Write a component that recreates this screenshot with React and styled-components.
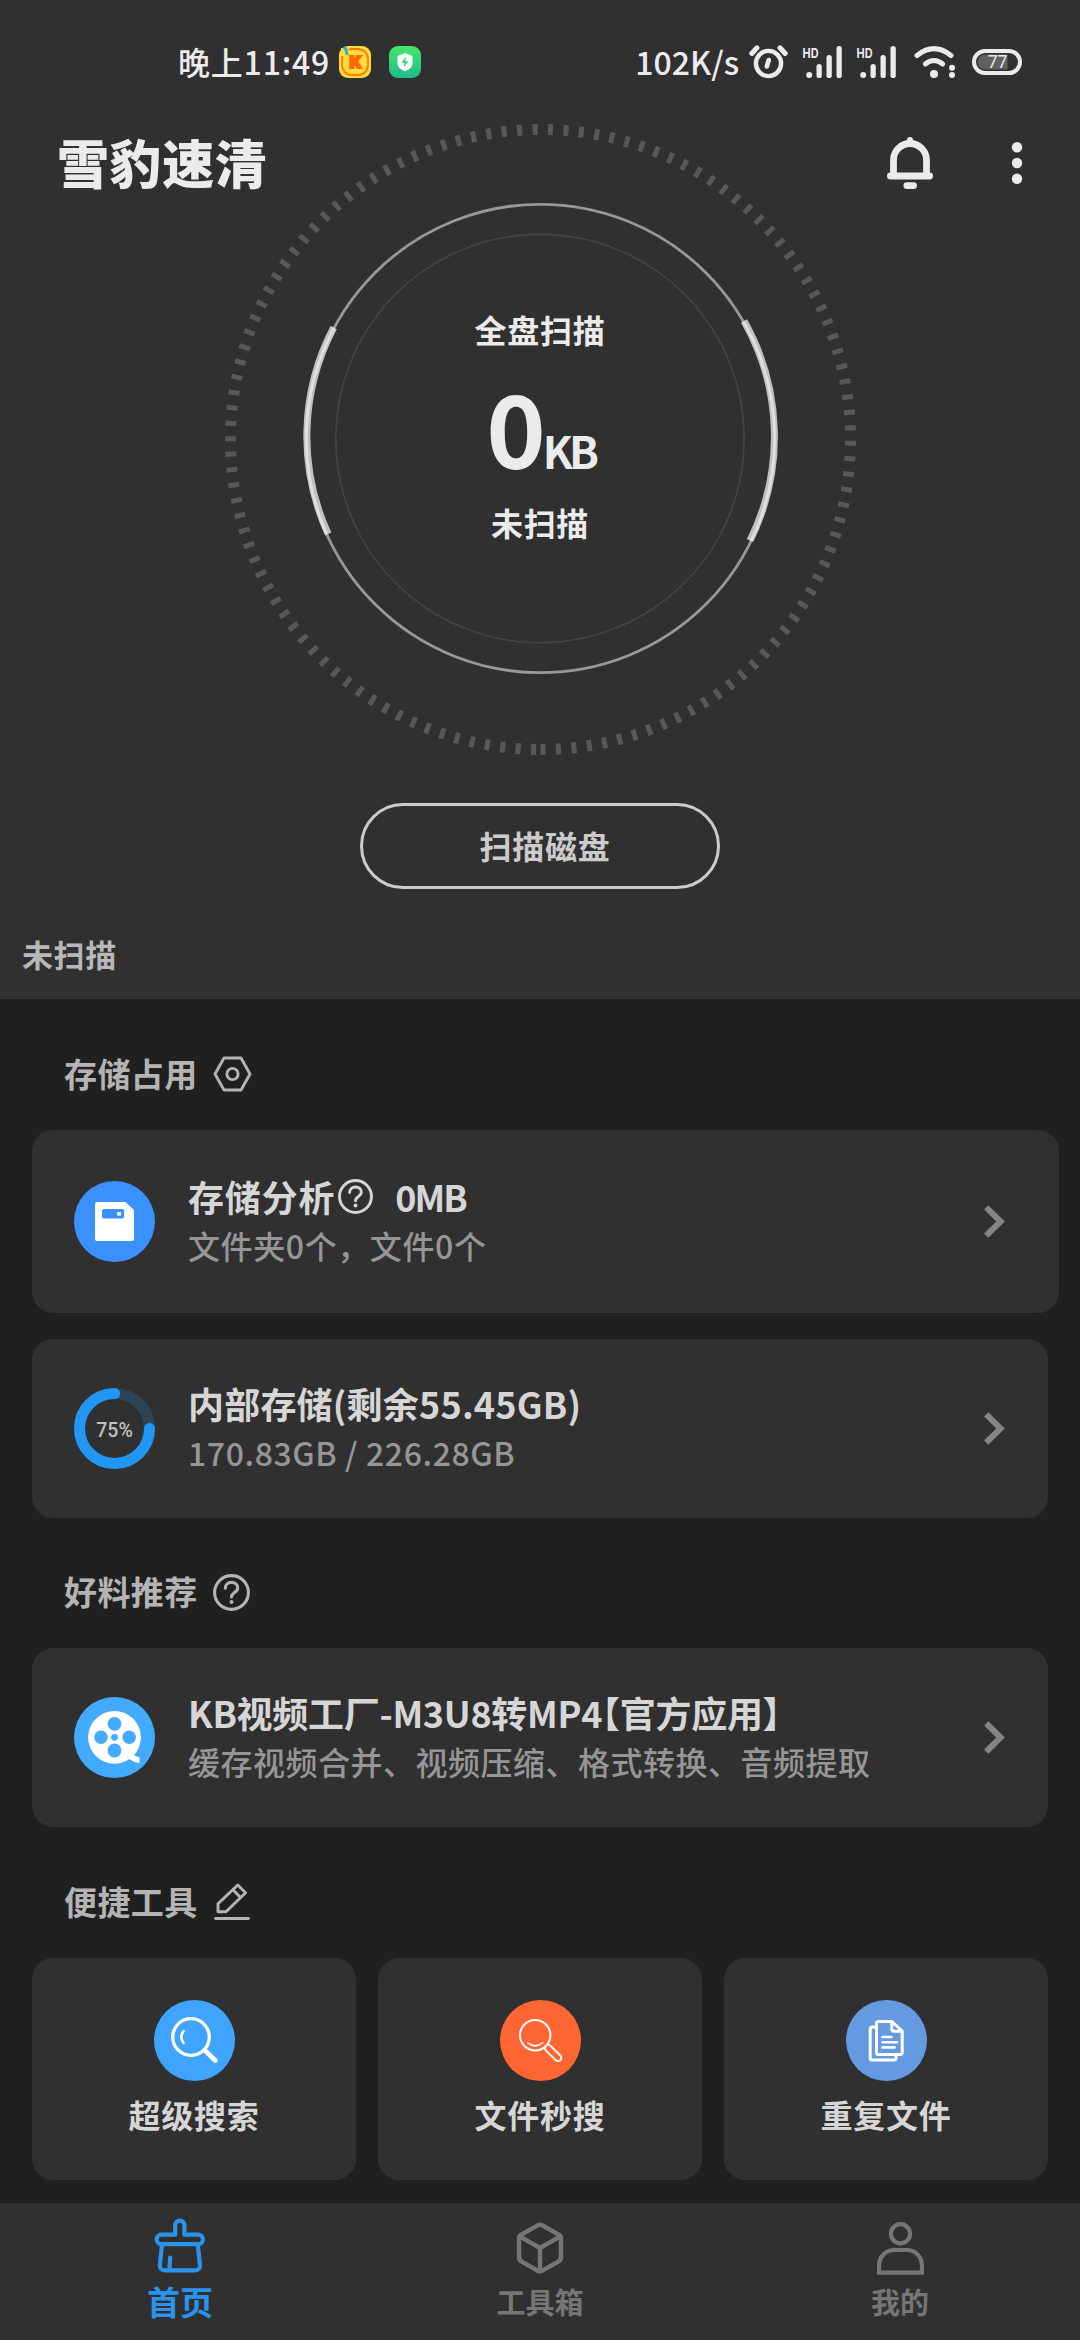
import React from 'react';
import styled, { createGlobalStyle } from 'styled-components';
import { Box } from 'lucide-react';

const GlobalStyle = createGlobalStyle`
  * {
    box-sizing: border-box;
  }

  body {
    margin: 0;
    background: #202020;
    color: #d6d6d6;
    font-family: 'Noto Sans CJK SC', 'Noto Sans', sans-serif;
  }

  svg {
    display: block;
    flex-shrink: 0;
  }
`;

const Screen = styled.div`
  display: flex;
  flex-direction: column;
  width: 1080px;
  height: 2340px;
  overflow: hidden;
`;

const Hero = styled.header`
  display: flex;
  flex-direction: column;
  align-items: center;
  height: 999px;
  background: #303030;
`;

const StatusBar = styled.div`
  display: flex;
  align-items: center;
  align-self: stretch;
  height: 124px;
  padding: 0 55px 0 178px;
  color: #ebebeb;
`;

const StatusText = styled.span`
  height: 48px;
  font-size: 32px;
  font-weight: 500;
  line-height: 46px;
  letter-spacing: ${({ $spacing }) => $spacing || 0}px;
  white-space: nowrap;
`;

const StatusApps = styled.div`
  display: flex;
  gap: 18px;
  margin-left: 9px;
`;

const StatusIcons = styled.div`
  display: flex;
  align-items: center;
  gap: 14px;
  margin-left: auto;

  ${StatusText} {
    margin-right: -4px;
  }
`;

const AppBar = styled.div`
  display: flex;
  align-items: center;
  align-self: stretch;
  height: 78px;
  padding: 0 57px 0 57px;
  color: #ebebeb;
`;

const AppTitle = styled.h1`
  flex: 1;
  height: 72px;
  margin: 0;
  font-size: 52px;
  font-weight: 900;
  line-height: 69px;
  letter-spacing: 0.6px;
`;

const AppActions = styled.div`
  display: flex;
  align-items: center;
  gap: 78px;
`;

const Dial = styled.div`
  position: relative;
  display: flex;
  flex-direction: column;
  align-items: center;
  width: 631px;
  height: 631px;
  margin-top: -78px;
  padding-top: 181px;
  color: #ebebeb;
`;

const DialRing = styled.svg`
  position: absolute;
  inset: 0;
`;

const DialLabel = styled.div`
  height: 48px;
  font-size: 32px;
  font-weight: 700;
  line-height: 48px;
  letter-spacing: 0.7px;
`;

const DialValue = styled.div`
  display: flex;
  align-items: baseline;
  height: 145px;
  padding-left: 1px;
  font-size: 101px;
  font-weight: 700;
  line-height: 145px;
  letter-spacing: -3px;

  small {
    font-size: 44px;
    letter-spacing: -4px;
  }
`;

const ScanButton = styled.button`
  width: 360px;
  height: 86px;
  margin-top: 48px;
  padding: 0 0 3px 10px;
  border: 3px solid #cbcbcb;
  border-radius: 43px;
  background: none;
  color: #cbcbcb;
  font-family: inherit;
  font-size: 32px;
  font-weight: 700;
  line-height: 48px;
  letter-spacing: 0.7px;
`;

const ScanStatus = styled.div`
  align-self: flex-start;
  margin-top: 41px;
  padding-left: 22px;
  color: #b8b8b8;
  font-size: 31px;
  font-weight: 700;
  line-height: 48px;
  letter-spacing: 0.6px;
`;

const Content = styled.main`
  flex: 1;
  padding: 0 32px;
`;

const SectionHead = styled.div`
  display: flex;
  align-items: center;
  gap: 15px;
  height: ${({ $height }) => $height || 131}px;
  padding: 18px 0 0 32px;
  color: #b4b4b4;
`;

const SectionTitle = styled.h2`
  height: 46px;
  margin: 0;
  font-size: 33px;
  font-weight: 700;
  line-height: 44px;
  letter-spacing: 0.4px;
`;

const Card = styled.div`
  display: flex;
  align-items: center;
  height: ${({ $wide }) => $wide ? 183 : 179}px;
  margin-right: ${({ $wide }) => $wide ? -11 : 0}px;
  padding: 0 ${({ $wide }) => $wide ? 54 : 43}px 0 42px;
  border-radius: 21px;
  background: #303030;

  & + & {
    margin-top: 26px;
  }
`;

const CardBody = styled.div`
  flex: 1;
  padding-left: 33px;
  white-space: nowrap;
`;

const CardTitle = styled.div`
  display: flex;
  align-items: center;
  height: 50px;
  font-size: 36px;
  font-weight: 700;
  line-height: 50px;
  letter-spacing: ${({ $spacing }) => $spacing || 0}px;

  span {
    height: 50px;
    line-height: 47px;
  }

  svg {
    margin: -2px 22px 0 3px;
  }
`;

const CardSize = styled.span`
  letter-spacing: -2px;
`;

const CardText = styled.div`
  height: 48px;
  color: #969696;
  font-size: 32px;
  font-weight: 500;
  line-height: 45px;
  letter-spacing: ${({ $spacing }) => $spacing || 0}px;
`;

const HalfWidth = styled.span`
  font-feature-settings: 'halt';
`;

const ToolGrid = styled.div`
  display: grid;
  grid-template-columns: repeat(3, 1fr);
  gap: 22px;
`;

const Tool = styled.div`
  display: flex;
  flex-direction: column;
  align-items: center;
  height: 222px;
  padding-top: 42px;
  border-radius: 21px;
  background: #303030;
`;

const ToolName = styled.div`
  margin-top: 9px;
  font-size: 32px;
  font-weight: 700;
  line-height: 48px;
  letter-spacing: 0.7px;
`;

const TabBar = styled.nav`
  display: grid;
  grid-template-columns: repeat(3, 1fr);
  height: 137px;
  background: #303030;
`;

const Tab = styled.div`
  display: flex;
  flex-direction: column;
  align-items: center;
  justify-content: flex-end;
  padding-bottom: 15px;
  color: ${({ $active }) => $active ? '#2a94ec' : '#767676'};
  font-size: ${({ $active }) => $active ? 33 : 29}px;
  font-weight: 700;
  line-height: 48px;
`;

const TabIcon = styled.div`
  display: flex;
  align-items: center;
  justify-content: center;
  height: 56px;
  margin-bottom: ${({ $active }) => $active ? 3 : 1}px;
`;

const AppBadgeK = () => (
  <svg width="32" height="32" viewBox="0 0 32 32">
    <rect width="32" height="32" rx="9" fill="#ffdd38" />
    <rect x="3" y="3" width="26" height="26" rx="10" fill="none" stroke="#ff7a14" strokeWidth="1.8" />
    <path d="M2 2h8v8H2z" fill="#ffdd38" />
    <path d="M5 1l3 4M7 5l1.500 4" stroke="#1fb6c9" strokeWidth="3" />
    <text x="16.5" y="22" textAnchor="middle" fontFamily="Inter, sans-serif" fontSize="16" fontWeight="900" fill="#ff6a00" stroke="#ff6a00" strokeWidth="2">K</text>
  </svg>
);

const AppBadgeShield = () => (
  <svg width="32" height="32" viewBox="0 0 32 32">
    <defs>
      <linearGradient id="shield" x1="0" y1="0" x2="0" y2="1">
        <stop offset="0" stopColor="#46e66a" />
        <stop offset="1" stopColor="#1bbd8b" />
      </linearGradient>
    </defs>
    <rect width="32" height="32" rx="9" fill="url(#shield)" />
    <path d="M16 7l7.500 3v7c0 4-3 6.500-7.500 8.200C11.500 23.500 8.500 21 8.500 17v-7z" fill="#fff" />
    <path d="M17 10.500l-4.500 6.300h3l-.8 4.700 4.700-6.300h-3.200z" fill="#2bd07c" />
  </svg>
);

const AlarmIcon = () => (
  <svg width="39" height="34" viewBox="0 0 39 34" fill="none" stroke="currentColor" strokeLinecap="round">
    <circle cx="19.500" cy="18.500" r="12.600" strokeWidth="4.400" />
    <path d="M2.800 8.500l5.200-5.700M36.200 8.500L31 2.800" strokeWidth="5" />
    <path d="M19.800 15l-2 6.500" strokeWidth="4.600" />
  </svg>
);

const SignalIcon = () => (
  <svg width="40" height="34" viewBox="0 0 40 34" fill="currentColor">
    <text x="0.500" y="12.600" fontFamily="Inter, sans-serif" fontSize="13.500" fontWeight="700" textLength="16" lengthAdjust="spacingAndGlyphs">HD</text>
    <circle cx="7.200" cy="30" r="3" />
    <rect x="14.500" y="19" width="5.300" height="14" rx="2.600" />
    <rect x="24.500" y="10" width="5.300" height="23" rx="2.600" />
    <rect x="34.500" y="1" width="5.300" height="32" rx="2.600" />
  </svg>
);

const WifiIcon = () => (
  <svg width="45" height="34" viewBox="0 0 45 34" fill="none" stroke="currentColor" strokeLinecap="round">
    <path d="M7 10.500Q24 -3.200 41 10.500" strokeWidth="5" />
    <path d="M15.300 19Q24 12 32.700 19" strokeWidth="5" />
    <circle cx="24" cy="29" r="4" fill="currentColor" stroke="none" />
    <circle cx="42" cy="22.700" r="3" fill="currentColor" stroke="none" />
    <circle cx="42" cy="30" r="3" fill="currentColor" stroke="none" />
  </svg>
);

const BatteryIcon = () => (
  <svg width="56" height="26" viewBox="0 0 56 26">
    <path d="M16 5.500H38.500V20.500H16a7.500 7.500 0 0 1 0-15z" fill="#606060" />
    <rect x="5" y="2" width="46" height="22" rx="11" fill="none" stroke="currentColor" strokeWidth="4" />
    <text x="28.500" y="19.300" textAnchor="middle" fontFamily="Roboto, sans-serif" fontSize="17.500" fill="currentColor">77</text>
  </svg>
);

const BellIcon = () => (
  <svg width="46" height="52" viewBox="0 0 46 52" fill="currentColor">
    <circle cx="23" cy="3" r="3" />
    <path d="M6.500 38V23a16.500 16.500 0 0 1 33 0v15" fill="none" stroke="currentColor" strokeWidth="6.800" />
    <rect y="35.600" width="46" height="6.800" rx="3.400" />
    <rect x="16.500" y="45.300" width="13.400" height="6.700" rx="3.300" />
  </svg>
);

const MoreIcon = () => (
  <svg width="12" height="44" viewBox="0 0 12 44" fill="currentColor">
    <circle cx="6" cy="6.200" r="5.200" />
    <circle cx="6" cy="22" r="5.200" />
    <circle cx="6" cy="37.800" r="5.200" />
  </svg>
);

const SettingsIcon = () => (
  <svg width="39" height="36" viewBox="0 0 39 36" fill="none" stroke="currentColor" strokeWidth="2.900" strokeLinejoin="round">
    <path d="M11 2h17l9 16-9 16H11L2 18z" />
    <circle cx="19.500" cy="18" r="5.600" />
  </svg>
);

const HelpIcon = ({ size }) => (
  <svg width={size} height={size} viewBox="0 0 37 37" fill="none" stroke="currentColor" strokeWidth="3.100" strokeLinecap="round">
    <circle cx="18.500" cy="18.500" r="16.900" />
    <path d="M12.300 14.300c0-3.600 2.700-5.900 6.200-5.900s6.200 2.300 6.200 5.500c0 4.600-6.200 4.600-6.200 9.100" />
    <circle cx="18.500" cy="28" r="2" fill="currentColor" stroke="none" />
  </svg>
);

const EditIcon = () => (
  <svg width="38" height="38" viewBox="-1 0 38 38" fill="none" stroke="currentColor" strokeWidth="2.900" strokeLinejoin="round" strokeLinecap="round">
    <path d="M4 28.800v-8L23.800 2l7.800 7.800L12 28.800z" />
    <path d="M19 6.800l7.500 7.600" />
    <path d="M1.500 35.500h33" />
  </svg>
);

const ChevronIcon = () => (
  <svg width="21" height="33" viewBox="0 0 21 33" fill="none" stroke="#858585" strokeWidth="6">
    <path d="M2.200 2.300l14.400 14.200L2.200 30.700" />
  </svg>
);

const StorageIcon = () => (
  <svg width="81" height="81" viewBox="0 0 81 81">
    <circle cx="40.500" cy="40.500" r="40.500" fill="#3b91ff" />
    <path d="M23 21h28.500l8.500 8v29a2 2 0 0 1-2 2H23a2 2 0 0 1-2-2V23a2 2 0 0 1 2-2z" fill="#fff" />
    <rect x="28" y="28" width="22" height="9.600" rx="2" fill="#3b91ff" />
    <rect x="43.200" y="31" width="3.800" height="3.600" fill="#fff" />
  </svg>
);

const UsageRing = ({ percent }) => {
  const length = 2 * Math.PI * 35;

  return (
    <svg width="81" height="81" viewBox="0 0 81 81">
      <circle cx="40.500" cy="40.500" r="35" fill="none" stroke="#2d4356" strokeWidth="11" />
      <circle
        cx="40.500"
        cy="40.500"
        r="35"
        fill="none"
        stroke="#2196f3"
        strokeWidth="11"
        strokeLinecap="round"
        strokeDasharray={`${length * percent / 100} ${length}`}
      />
      <text x="40.500" y="48.800" textAnchor="middle" fontFamily="Roboto, sans-serif" fontSize="19.500" fontWeight="500" fill="#c0c0c0">{percent}%</text>
    </svg>
  );
};

const ReelIcon = () => (
  <svg width="81" height="81" viewBox="0 0 81 81" fill="#42aaff">
    <circle cx="40.500" cy="40.500" r="40.500" />
    <circle cx="40.500" cy="40.300" r="26.400" fill="#fff" />
    <path d="M54 57c4 4 7 6 11.500 6" stroke="#fff" strokeWidth="6" fill="none" />
    <circle cx="40.500" cy="26.800" r="6.900" />
    <circle cx="27" cy="40.300" r="6.700" />
    <circle cx="55.200" cy="40.300" r="6.700" />
    <circle cx="40.500" cy="53.500" r="6.900" />
    <circle cx="40.500" cy="40.300" r="3.400" />
  </svg>
);

const SuperSearchIcon = () => (
  <svg width="81" height="81" viewBox="0 0 81 81" fill="none" stroke="#fff" strokeLinecap="round">
    <circle cx="40.500" cy="40.500" r="40.500" fill="#3fa4ff" stroke="none" />
    <circle cx="37" cy="37" r="18.300" strokeWidth="3.300" />
    <path d="M29.600 31Q25 37 29.600 43" strokeWidth="2.600" />
    <path d="M51 50.500l10.300 10" strokeWidth="4.800" />
  </svg>
);

const QuickSearchIcon = () => (
  <svg width="81" height="81" viewBox="0 0 81 81" fill="none" stroke="#fff" strokeLinecap="round">
    <circle cx="40.500" cy="40.500" r="40.500" fill="#ff6634" stroke="none" />
    <path d="M48 48l10 9.800" strokeWidth="8.600" />
    <path d="M48 48l10 9.800" stroke="#ff6634" strokeWidth="4.600" />
    <circle cx="35.200" cy="35.200" r="15.200" fill="#ff6634" strokeWidth="2" />
    <path d="M27.700 42.700Q35.200 49 42.700 42.700" strokeWidth="1.500" />
  </svg>
);

const DuplicateIcon = () => (
  <svg width="81" height="81" viewBox="0 0 81 81" fill="none" stroke="#fff" strokeWidth="3" strokeLinejoin="round" strokeLinecap="round">
    <circle cx="40.500" cy="40.500" r="40.500" fill="#649ae1" stroke="none" />
    <path d="M30 27h-3.800a2 2 0 0 0-2 2v29a2 2 0 0 0 2 2H48a2 2 0 0 0 2-2v-2.500" />
    <path d="M32.500 21.500h13.300L56.200 31v21.500a2 2 0 0 1-2 2H32.500a2 2 0 0 1-2-2v-29a2 2 0 0 1 2-2z" />
    <path d="M45.800 22v7.500a1.700 1.700 0 0 0 1.700 1.700h8" />
    <path d="M36.500 37h9M36.500 42.200h14.500M36.500 47.400h12" strokeWidth="2.600" />
  </svg>
);

const BrushIcon = () => (
  <svg width="52" height="56" viewBox="0 0 52 56" fill="none" stroke="currentColor" strokeWidth="4.200" strokeLinecap="round" strokeLinejoin="round">
    <path d="M21.200 16.700V7.300a4.600 4.600 0 0 1 9.200 0v9.400h13.800a4.700 4.700 0 0 1 0 9.400H7.400a4.700 4.700 0 0 1 0-9.400z" />
    <path d="M8 26.500L5.800 47.500a4.500 4.500 0 0 0 4.500 4.800h31.200a4.500 4.500 0 0 0 4.500-4.800L43.800 26.500" />
    <path d="M16.200 39.500l-.8 12" />
  </svg>
);

const UserIcon = () => (
  <svg width="47" height="53" viewBox="0 0 47 53" fill="none" stroke="currentColor" strokeWidth="4.200">
    <circle cx="23.500" cy="11.700" r="9.600" />
    <path d="M2.100 50.600V43a15 15 0 0 1 15-15h12.800a15 15 0 0 1 15 15v7.600z" />
  </svg>
);

const ScanRing = () => (
  <DialRing width="631" height="631" viewBox="0 0 631 631" fill="none">
    {/* tick marks run counter-clockwise from the bottom */}
    <path d="M315.500 625.500a310 310 0 0 0 0-620a310 310 0 0 0 0 620" stroke="#585858" strokeWidth="11" strokeDasharray="5 10.500" />
    <circle cx="315" cy="314.500" r="204.200" stroke="#444" strokeWidth="1.500" />
    <path d="M108.700 203.500A234 234 0 0 0 103.200 410" stroke="#c0c0c0" strokeWidth="7" />
    <path d="M519 197A234 234 0 0 1 525 416.500" stroke="#c0c0c0" strokeWidth="7" />
    <circle cx="315.500" cy="314.500" r="234.200" stroke="#fff" strokeOpacity="0.500" strokeWidth="2.800" />
  </DialRing>
);

const tools = [
  { name: '超级搜索', icon: <SuperSearchIcon /> },
  { name: '文件秒搜', icon: <QuickSearchIcon /> },
  { name: '重复文件', icon: <DuplicateIcon /> },
];

const tabs = [
  { name: '首页', icon: <BrushIcon />, active: true },
  { name: '工具箱', icon: <Box size={56} strokeWidth={1.9} /> },
  { name: '我的', icon: <UserIcon /> },
];

export default function App() {
  return (
    <Screen>
      <GlobalStyle />
      <Hero>
        <StatusBar>
          <StatusText $spacing={0.8}>晚上11:49</StatusText>
          <StatusApps>
            <AppBadgeK />
            <AppBadgeShield />
          </StatusApps>
          <StatusIcons>
            <StatusText>102K/s</StatusText>
            <AlarmIcon />
            <SignalIcon />
            <SignalIcon />
            <WifiIcon />
            <BatteryIcon />
          </StatusIcons>
        </StatusBar>
        <AppBar>
          <AppTitle>雪豹速清</AppTitle>
          <AppActions>
            <BellIcon />
            <MoreIcon />
          </AppActions>
        </AppBar>
        <Dial>
          <ScanRing />
          <DialLabel>全盘扫描</DialLabel>
          <DialValue>0<small>KB</small></DialValue>
          <DialLabel>未扫描</DialLabel>
        </Dial>
        <ScanButton>扫描磁盘</ScanButton>
        <ScanStatus>未扫描</ScanStatus>
      </Hero>

      <Content>
        <SectionHead>
          <SectionTitle>存储占用</SectionTitle>
          <SettingsIcon />
        </SectionHead>
        <Card $wide>
          <StorageIcon />
          <CardBody>
            <CardTitle $spacing={0.8}>
              <span>存储分析</span>
              <HelpIcon size={35} />
              <CardSize>0MB</CardSize>
            </CardTitle>
            <CardText $spacing={0.6}>文件夹0个，文件0个</CardText>
          </CardBody>
          <ChevronIcon />
        </Card>
        <Card>
          <UsageRing percent={75} />
          <CardBody>
            <CardTitle $spacing={0.2}>
              <span>内部存储(剩余55.45GB)</span>
            </CardTitle>
            <CardText $spacing={0.6}>170.83GB / 226.28GB</CardText>
          </CardBody>
          <ChevronIcon />
        </Card>

        <SectionHead $height={130}>
          <SectionTitle>好料推荐</SectionTitle>
          <HelpIcon size={37} />
        </SectionHead>
        <Card>
          <ReelIcon />
          <CardBody>
            <CardTitle $spacing={-0.3}>
              <span>KB视频工厂-M3U8转MP4</span>
              <HalfWidth>【官方应用】</HalfWidth>
            </CardTitle>
            <CardText $spacing={0.5}>缓存视频合并、视频压缩、格式转换、音频提取</CardText>
          </CardBody>
          <ChevronIcon />
        </Card>

        <SectionHead>
          <SectionTitle>便捷工具</SectionTitle>
          <EditIcon />
        </SectionHead>
        <ToolGrid>
          {tools.map(({ name, icon }) => (
            <Tool key={name}>
              {icon}
              <ToolName>{name}</ToolName>
            </Tool>
          ))}
        </ToolGrid>
      </Content>

      <TabBar>
        {tabs.map(({ name, icon, active }) => (
          <Tab key={name} $active={active}>
            <TabIcon $active={active}>{icon}</TabIcon>
            {name}
          </Tab>
        ))}
      </TabBar>
    </Screen>
  );
}
